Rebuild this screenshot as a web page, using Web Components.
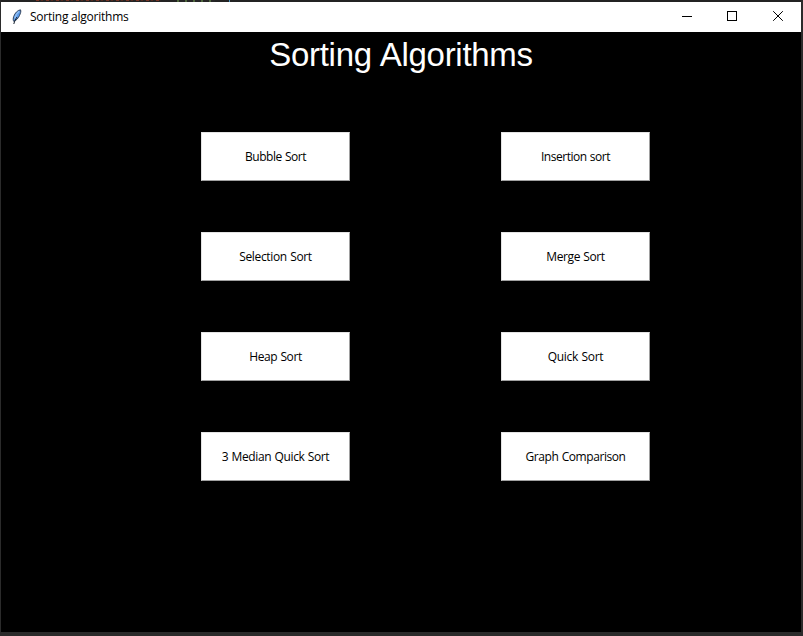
<!DOCTYPE html>
<html lang="en">
<head>
<meta charset="utf-8">
<title>Sorting algorithms</title>
<style>
html,body{margin:0;height:100%;overflow:hidden;background:#2b2b2b}
</style>
</head>
<body>
<app-window caption="Sorting algorithms">
  <page-heading slot="heading">Sorting Algorithms</page-heading>
  <sort-button span="61">Bubble Sort</sort-button>
  <sort-button span="69">Insertion sort</sort-button>
  <sort-button span="72.5">Selection Sort</sort-button>
  <sort-button span="58.5">Merge Sort</sort-button>
  <sort-button span="52.5">Heap Sort</sort-button>
  <sort-button span="55.5">Quick Sort</sort-button>
  <sort-button span="107.5">3 Median Quick Sort</sort-button>
  <sort-button span="100">Graph Comparison</sort-button>
</app-window>
<script>
// Text run whose tracking is adjusted so it spans a given width.
customElements.define('fit-text', class extends HTMLElement {
  connectedCallback() {
    const root = this.attachShadow({mode: 'open'});
    root.innerHTML = `<style>:host{display:inline-block;white-space:pre}span{display:inline-block}</style><span></span>`;
    const s = root.querySelector('span'), t = this.getAttribute('text'), w = +this.getAttribute('span');
    s.textContent = t;
    const sp = (w - s.getBoundingClientRect().width) / t.length;
    s.style.letterSpacing = sp.toFixed(3) + 'px';
  }
});

customElements.define('page-heading', class extends HTMLElement {
  connectedCallback() {
    this.attachShadow({mode: 'open'}).innerHTML = `<style>
      :host{display:flex;justify-content:center;font:33px/46px "Liberation Sans",Arial,sans-serif;color:#fff;word-spacing:1px}
      </style><fit-text span="263.500" text="${this.textContent}"></fit-text>`;
  }
});

customElements.define('sort-button', class extends HTMLElement {
  connectedCallback() {
    this.attachShadow({mode: 'open'}).innerHTML = `<style>
      :host{display:block}
      button{display:flex;align-items:center;justify-content:center;box-sizing:border-box;width:149px;height:49px;
        margin:0;padding:0;background:#fff;border:1px solid;border-color:#e3e3e3 #a0a0a0 #a0a0a0 #e3e3e3;border-radius:0;
        font:12px/16px "Open Sans","Noto Sans",sans-serif;color:#000}
      fit-text{word-spacing:.6px}
      </style><button><fit-text span="${this.getAttribute('span')}" text="${this.textContent}"></fit-text></button>`;
  }
});

customElements.define('title-bar', class extends HTMLElement {
  connectedCallback() {
    this.attachShadow({mode: 'open'}).innerHTML = `<style>
      :host{display:flex;align-items:center;height:30px;background:#fff;color:#000;font:12px/16px "Open Sans","Noto Sans",sans-serif}
      .feather{margin-left:8px;width:16px;height:16px;margin-right:5px}
      .controls{margin-left:auto;display:flex}
      .controls svg{width:46px;height:30px;display:block}
      .controls svg:last-child{width:45px}
      </style>
      <svg class="feather" viewBox="0 0 16 16">
        <path d="M11.500 .8C8.500 1.200 6 4 4.700 7.500c-.7 2-.6 3.800 0 4.800 2.500-.6 4.500-3 5.800-5.800C11.500 4.300 12.300 2.300 11.500.8Z" fill="#5b9bea" stroke="#26334a" stroke-width=".9"/>
        <path d="M10.300 2.300C8 3.800 6.500 6.200 5.800 9.500" fill="none" stroke="#8fbdf3" stroke-width="1.300"/>
        <path d="M8 8C6.500 10.500 5.600 12 4.800 15" fill="none" stroke="#16202d" stroke-width="1"/>
      </svg>
      <fit-text span="98.500" text="${this.getAttribute('caption')}"></fit-text>
      <div class="controls">
        <svg viewBox="0 0 46 30"><path d="M18 14.500h10" stroke="#000"/></svg>
        <svg viewBox="0 0 46 30" shape-rendering="crispEdges"><path d="M17.500 9.500h9v9h-9z" fill="none" stroke="#000"/></svg>
        <svg viewBox="0 0 45 30"><path d="M17.200 9.200l9.600 9.600M26.800 9.200l-9.600 9.600" stroke="#000" stroke-width="1"/></svg>
      </div>`;
  }
});

customElements.define('app-window', class extends HTMLElement {
  connectedCallback() {
    this.attachShadow({mode: 'open'}).innerHTML = `<style>
      :host{display:grid;grid-template-rows:2px 630px 4px;box-sizing:border-box;width:803px;height:636px;padding:0 2px 0 1px;background:#2b2b2b}
      .edge{background:repeating-linear-gradient(90deg,#7a3425 0 3px,#2b2525 3px 5px,#54291f 5px 7px,#262626 7px 10px) 35px 0/125px 1px no-repeat,
        repeating-linear-gradient(90deg,#4e663d 0 2px,#262626 2px 8px) 176px 0/38px 2px no-repeat,
        linear-gradient(#4d92bd,#4d92bd) 228px 0/1px 2px no-repeat,#232323}
      .frame{display:flex;flex-direction:column;background:#000}
      .grid{display:grid;grid-template-columns:149px 149px;column-gap:151px;row-gap:51px;padding:54px 0 0 200px}
      </style>
      <div class="edge"></div>
      <div class="frame">
        <title-bar caption="${this.getAttribute('caption')}"></title-bar>
        <slot name="heading"></slot>
        <div class="grid"><slot></slot></div>
      </div>`;
  }
});
</script>
</body>
</html>
